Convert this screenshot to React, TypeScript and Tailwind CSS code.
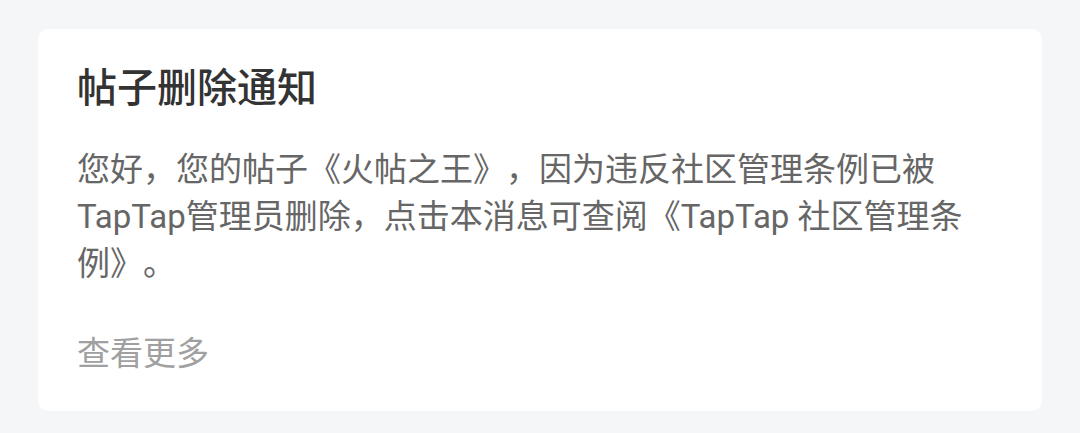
import React from "react";

export default function App() {
  return (
    <div
      className="w-[1080px] h-[433px] bg-[#f5f6f7] pt-[29px] px-[38px] [text-spacing-trim:space-all]"
      style={{ fontFamily: 'Roboto, "Noto Sans CJK SC", sans-serif' }}
    >
      <div className="bg-white rounded-[10px] h-[382px] pt-[40px] pl-[39px] pr-[39px]">
        <h1 className="text-[40px] leading-[40px] font-medium text-[#333333]">帖子删除通知</h1>
        <p className="mt-[37px] text-[33px] leading-[47px] text-[#666666]">
          您好，您的帖子《火帖之王》，因为违反社区管理条例已被TapTap管理员删除，点击本消息可查阅《TapTap 社区管理条例》。
        </p>
        <div className="mt-[43px] text-[33px] leading-[47px] text-[#a0a0a0]">查看更多</div>
      </div>
    </div>
  );
}
